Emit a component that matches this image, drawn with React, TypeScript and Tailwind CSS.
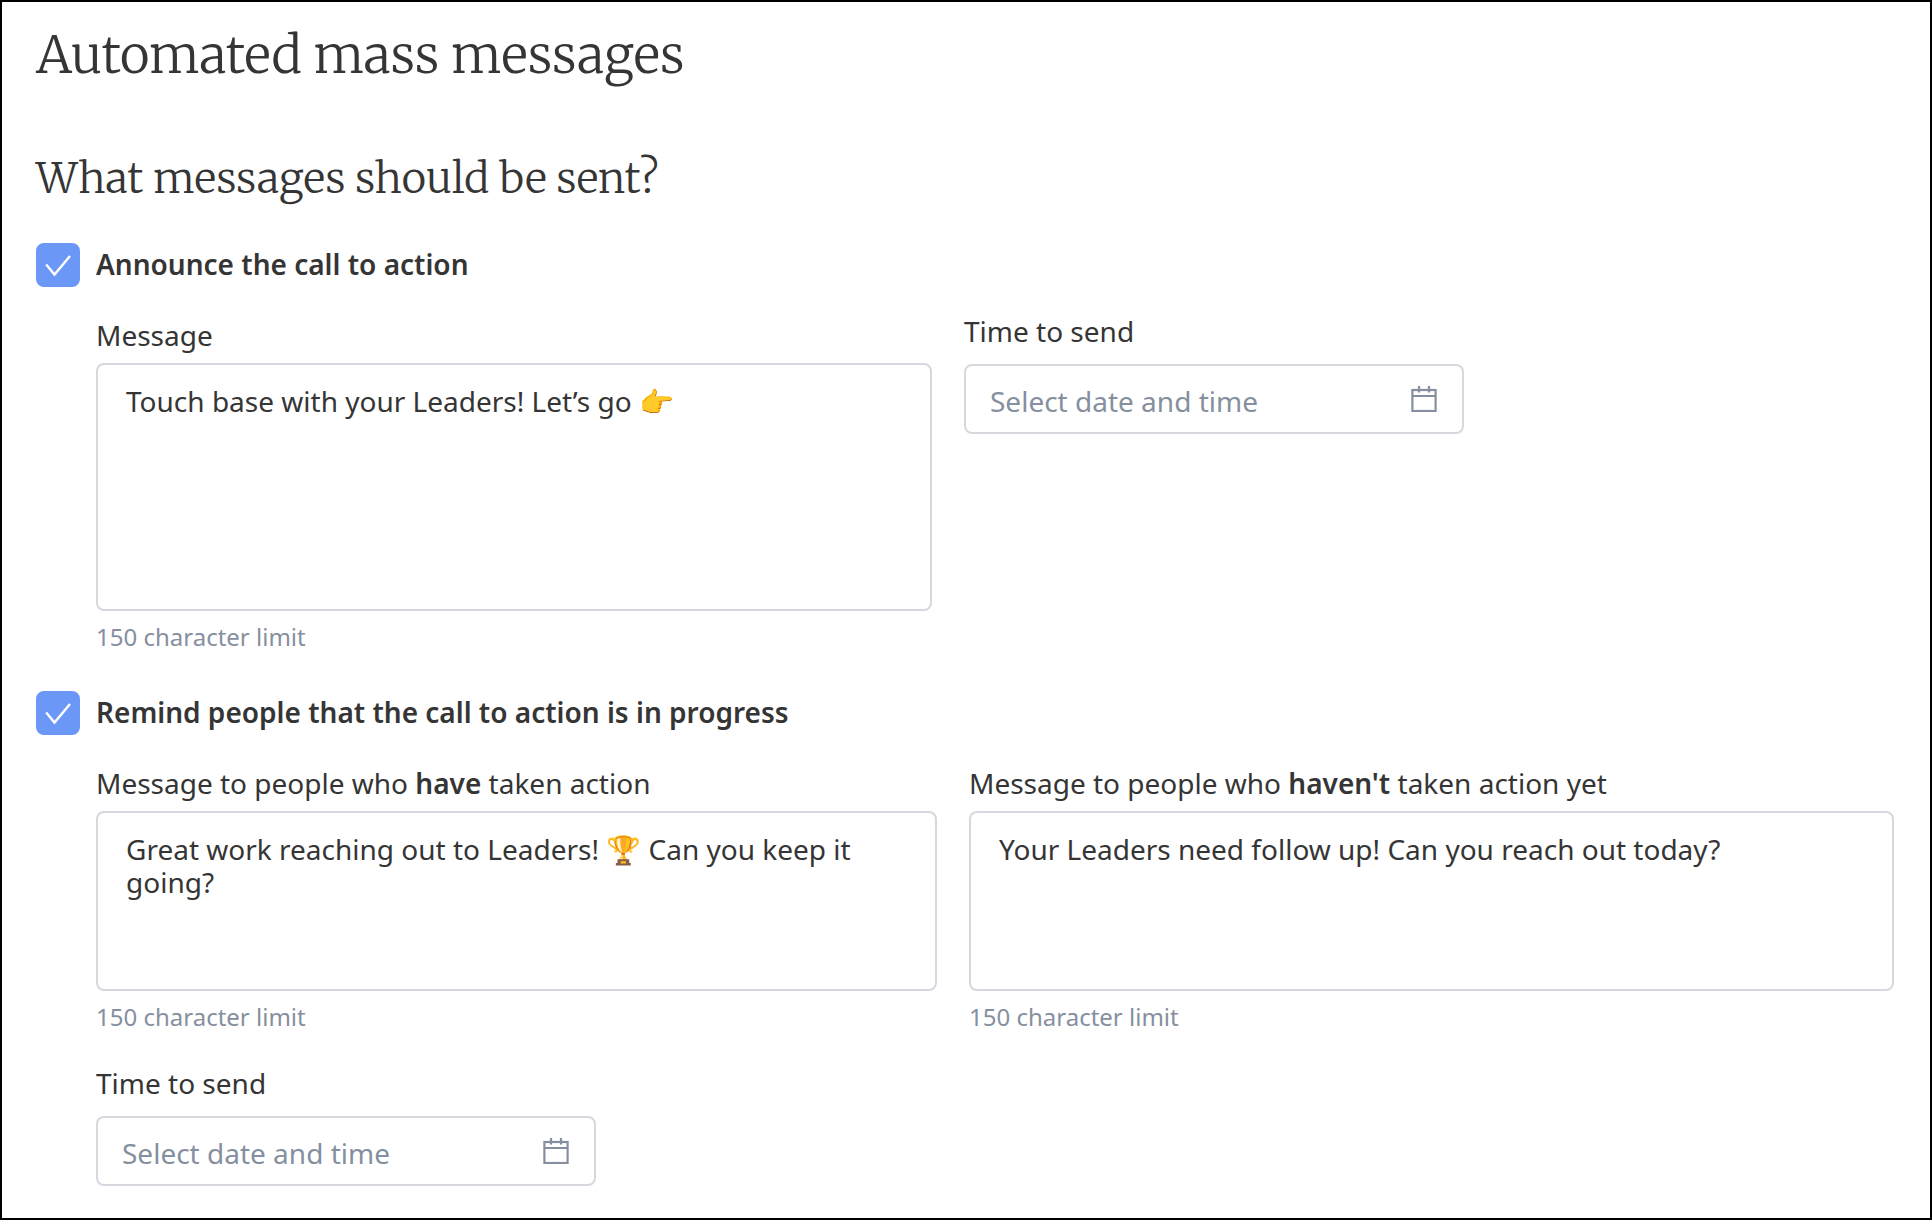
import React, { useState } from "react";

type CheckboxRowProps = {
  id: string;
  label: string;
};

const CheckboxRow: React.FC<CheckboxRowProps> = ({ id, label }) => {
  const [checked, setChecked] = useState(true);

  return (
    <div className="flex items-center gap-4">
      <div className="relative h-11 w-11 shrink-0">
        <input
          id={id}
          type="checkbox"
          checked={checked}
          onChange={(e) => setChecked(e.target.checked)}
          className="block h-11 w-11 appearance-none rounded-lg border-2 border-[#d5d9df] checked:border-[#6b97f7] checked:bg-[#6b97f7]"
        />
        {checked && (
          <svg
            viewBox="0 0 44 44"
            fill="none"
            stroke="white"
            strokeWidth="2.4"
            className="pointer-events-none absolute inset-0 h-11 w-11"
          >
            <path d="M10.2 21.6l8.3 10L34 13" />
          </svg>
        )}
      </div>
      <label htmlFor={id} className="pb-0.5 leading-10 font-semibold">
        {label}
      </label>
    </div>
  );
};

type MessageFieldProps = {
  id: string;
  label: React.ReactNode;
  text: string;
  heightClass: string;
};

const MessageField: React.FC<MessageFieldProps> = ({ id, label, text, heightClass }) => {
  const [value, setValue] = useState(text);

  return (
    <div className="flex flex-col">
      <label htmlFor={id} className="leading-10">
        {label}
      </label>
      <textarea
        id={id}
        value={value}
        maxLength={150}
        onChange={(e) => setValue(e.target.value)}
        className={`mt-2 block w-full resize-none overflow-hidden rounded-lg border-2 border-[#d5d9df] bg-white px-7 py-5 leading-[33px] outline-none ${heightClass}`}
      />
      <p className="mt-2 text-2xl leading-9 text-[#868fa0]">150 character limit</p>
    </div>
  );
};

const TimeField: React.FC<{ id: string }> = ({ id }) => {
  return (
    <div className="flex w-full max-w-[500px] flex-col">
      <label htmlFor={id} className="leading-10">
        Time to send
      </label>
      <div className="relative mt-[13px]">
        <input
          id={id}
          type="text"
          placeholder="Select date and time"
          className="block h-[70px] w-full rounded-lg border-2 border-[#d5d9df] bg-white pt-1 pr-16 pl-6 outline-none placeholder:text-[#868fa0]"
        />
        <button
          type="button"
          aria-label="Open calendar"
          className="absolute inset-y-0 right-[27px] flex items-center text-[#868fa0]"
        >
          <svg width="26" height="26" viewBox="0 0 26 26" fill="none" stroke="currentColor" strokeWidth="2.2">
            <rect x="1.4" y="4" width="23.2" height="21" />
            <path d="M1 10h24M8 0v6.5M18 0v6.5" />
          </svg>
        </button>
      </div>
    </div>
  );
};

export default function App() {
  return (
    <main className="min-h-screen border-2 border-black bg-white pt-[23px] pr-9 pb-8 pl-[34px] font-['Noto_Sans',sans-serif] text-[28px] text-[#353535]">
      <h1 className="font-['Merriweather',serif] text-[51px] leading-[60px] font-light">
        Automated mass messages
      </h1>
      <h2 className="mt-[68px] font-['Merriweather',serif] text-[42px] leading-[50px] font-light">
        What messages should be sent?
      </h2>

      <section className="mt-10">
        <CheckboxRow id="announce" label="Announce the call to action" />
        <div className="mt-6 grid grid-cols-[836fr_930fr] gap-8 pl-[60px]">
          <div className="pt-1">
            <MessageField
              id="announce-message"
              label="Message"
              text="Touch base with your Leaders! Let’s go 👉"
              heightClass="h-[248px]"
            />
          </div>
          <TimeField id="announce-time" />
        </div>
      </section>

      <section className="mt-9">
        <CheckboxRow id="remind" label="Remind people that the call to action is in progress" />
        <div className="mt-7 pl-[60px]">
          <div className="grid grid-cols-[841fr_925fr] gap-8">
            <MessageField
              id="remind-have"
              label={
                <>
                  Message to people who <b className="font-semibold">have</b> taken action
                </>
              }
              text="Great work reaching out to Leaders! 🏆 Can you keep it going?"
              heightClass="h-[180px]"
            />
            <MessageField
              id="remind-havent"
              label={
                <>
                  Message to people who <b className="font-semibold">haven't</b> taken action yet
                </>
              }
              text="Your Leaders need follow up! Can you reach out today?"
              heightClass="h-[180px]"
            />
          </div>
          <div className="mt-7">
            <TimeField id="remind-time" />
          </div>
        </div>
      </section>
    </main>
  );
}
